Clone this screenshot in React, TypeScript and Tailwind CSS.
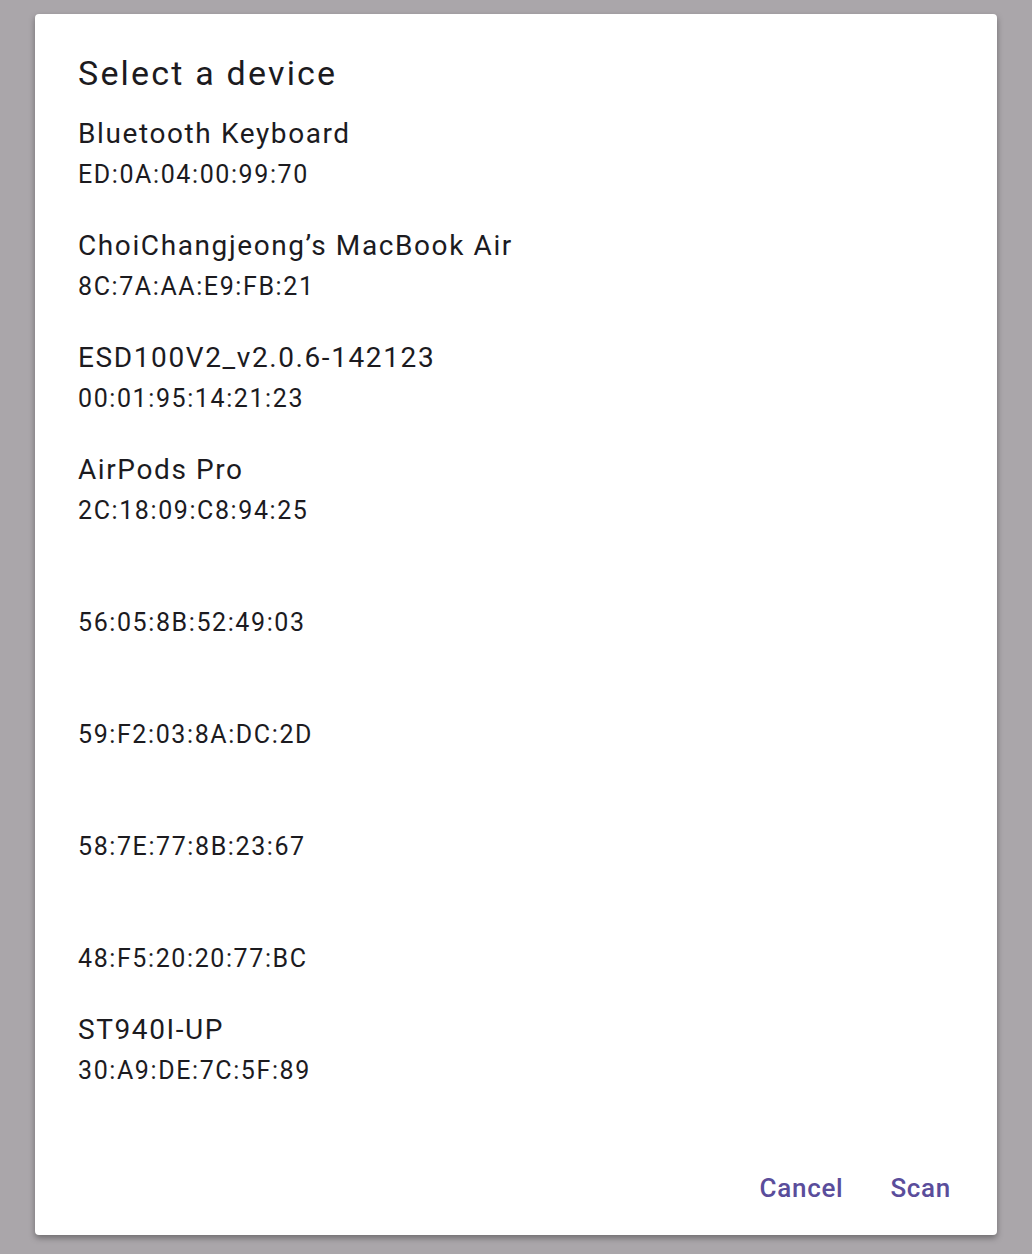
const devices = [
  { name: "Bluetooth Keyboard", mac: "ED:0A:04:00:99:70" },
  { name: "ChoiChangjeong’s MacBook Air", mac: "8C:7A:AA:E9:FB:21" },
  { name: "ESD100V2_v2.0.6-142123", mac: "00:01:95:14:21:23" },
  { name: "AirPods Pro", mac: "2C:18:09:C8:94:25" },
  { name: "", mac: "56:05:8B:52:49:03" },
  { name: "", mac: "59:F2:03:8A:DC:2D" },
  { name: "", mac: "58:7E:77:8B:23:67" },
  { name: "", mac: "48:F5:20:20:77:BC" },
  { name: "ST940I-UP", mac: "30:A9:DE:7C:5F:89" },
];

const App = () => {
  return (
    <div
      className="w-[1032px] h-[1254px] bg-[#aaa6aa] pt-[14px] pl-[35px]"
      style={{ fontFamily: "Roboto, 'Liberation Sans', sans-serif" }}
    >
      <div className="w-[962px] h-[1221px] bg-white rounded-[4px] shadow-[0_3px_6px_rgba(0,0,0,0.35)] flex flex-col pt-[39px] pl-[43px] pr-[46px]">
        <h1 className="text-[34px] leading-[40px] tracking-[2.2px] text-[#1c1b1f]">Select a device</h1>
        <div className="mt-[20px] flex flex-col">
          {devices.map((d) => (
            <div key={d.mac} className="h-[112px] flex flex-col pt-[1px] text-[#1c1b1f]">
              <p className="text-[28px] leading-[40px] h-[40px] tracking-[1.6px]">{d.name}</p>
              <p className="text-[25px] leading-[40px] pt-[1px] tracking-[1.6px]">{d.mac}</p>
            </div>
          ))}
        </div>
        <div className="mt-auto mb-[27px] flex justify-end gap-[47px] text-[26px] tracking-[0.7px] font-medium text-[#5a4d9b]">
          <button>Cancel</button>
          <button>Scan</button>
        </div>
      </div>
    </div>
  );
};

export default App;
